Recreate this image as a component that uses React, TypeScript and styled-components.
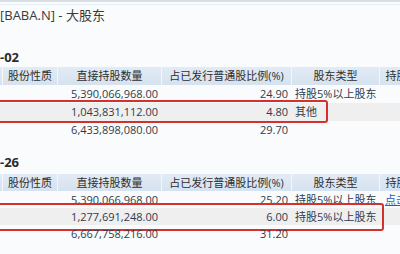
import styled, { createGlobalStyle } from 'styled-components';

const GlobalStyle = createGlobalStyle`
  html, body {
    margin: 0;
    padding: 0;
    background: #fafbfc;
    overflow: hidden;
  }
  body {
    font-family: "Open Sans", "Noto Sans CJK SC", sans-serif;
    color: #333;
  }
`;

const Page = styled.div`
  width: 400px;
  height: 254px;
  overflow: hidden;
  background: #fafbfc;
  border-top: 2px solid #d9dee3;
  box-sizing: border-box;
`;

const TopLine = styled.div`
  height: 1px;
  margin-top: 2px;
  background: #e3edf8;
`;

const Title = styled.div`
  height: 18px;
  line-height: 18px;
  margin-top: 1px;
  margin-left: -52px;
  font-size: 13px;
  color: #3a3a3a;
  white-space: nowrap;
`;

const SectionTitle = styled.div<{ $gap: number }>`
  height: 18px;
  line-height: 18px;
  margin-top: ${(p) => p.$gap}px;
  font-size: 13px;
  font-weight: 700;
  color: #2b2b2b;
`;

const Table = styled.div<{ $gap: number }>`
  margin-left: -60px;
  margin-top: ${(p) => p.$gap}px;
  width: 496px;
  font-size: 11px;
`;

const Row = styled.div<{ $h: number; $alt?: boolean }>`
  position: relative;
  display: grid;
  grid-template-columns: 63px 55px 104px 130px 88px 56px;
  height: ${(p) => p.$h}px;
  line-height: ${(p) => p.$h}px;
  background: ${(p) => (p.$alt ? '#efefef' : 'transparent')};
  color: #2f3b4d;
  white-space: nowrap;
`;

const HeaderRow = styled(Row)`
  background: linear-gradient(#e2ebf5, #d5e2ef);
  color: #2e2e2e;
`;

const HeadCell = styled.div`
  text-align: center;
  border-right: 1px solid #f4f7fa;
  overflow: hidden;
`;

const NumCell = styled.div`
  text-align: right;
  padding-right: 4px;
  overflow: hidden;
`;

const TextCell = styled.div`
  padding-left: 3px;
  overflow: hidden;
`;

const LinkCell = styled.div`
  padding-left: 5px;
  color: #2b5cb8;
  text-decoration: underline;
  overflow: hidden;
`;

const Highlight = styled.div<{ $w: number; $top: number; $bottom: number }>`
  position: absolute;
  left: 40px;
  width: ${(p) => p.$w}px;
  top: ${(p) => p.$top}px;
  bottom: ${(p) => p.$bottom}px;
  border: 2.5px solid #d5302b;
  border-radius: 3px;
  box-sizing: border-box;
  pointer-events: none;
`;

type Holder = {
  qty: string;
  pct: string;
  type?: string;
  link?: string;
  marked?: boolean;
};

type Section = {
  title: string;
  titleGap: number;
  tableGap: number;
  rowH: number;
  box: { w: number; top: number; bottom: number };
  rows: Holder[];
};

const sections: Section[] = [
  {
    title: '-02',
    titleGap: 24,
    tableGap: 1,
    rowH: 18,
    box: { w: 348, top: -3, bottom: -2 },
    rows: [
      { qty: '5,390,066,968.00', pct: '24.90', type: '持股5%以上股东' },
      { qty: '1,043,831,112.00', pct: '4.80', type: '其他', marked: true },
      { qty: '6,433,898,080.00', pct: '29.70' },
    ],
  },
  {
    title: '-26',
    titleGap: 14,
    tableGap: 3,
    rowH: 17,
    box: { w: 404, top: -5, bottom: -6 },
    rows: [
      { qty: '5,390,066,968.00', pct: '25.20', type: '持股5%以上股东', link: '点击查看' },
      { qty: '1,277,691,248.00', pct: '6.00', type: '持股5%以上股东', marked: true },
      { qty: '6,667,758,216.00', pct: '31.20' },
    ],
  },
];

const headers = ['股东名称', '股份性质', '直接持股数量', '占已发行普通股比例(%)', '股东类型', '持股变化'];

export default function App() {
  return (
    <>
      <GlobalStyle />
      <Page>
        <TopLine />
        <Title>阿里巴巴[BABA.N] - 大股东</Title>
        {sections.map((s) => (
          <div key={s.title}>
            <SectionTitle $gap={s.titleGap}>{s.title}</SectionTitle>
            <Table $gap={s.tableGap}>
              <HeaderRow $h={s.rowH}>
                {headers.map((h) => (
                  <HeadCell key={h}>{h}</HeadCell>
                ))}
              </HeaderRow>
              {s.rows.map((r) => (
                <Row key={r.qty} $h={s.rowH} $alt={r.marked}>
                  <TextCell />
                  <TextCell />
                  <NumCell>{r.qty}</NumCell>
                  <NumCell>{r.pct}</NumCell>
                  <TextCell>{r.type}</TextCell>
                  {r.link ? <LinkCell>{r.link}</LinkCell> : <TextCell />}
                  {r.marked && (
                    <Highlight $w={s.box.w} $top={s.box.top} $bottom={s.box.bottom} />
                  )}
                </Row>
              ))}
            </Table>
          </div>
        ))}
      </Page>
    </>
  );
}
